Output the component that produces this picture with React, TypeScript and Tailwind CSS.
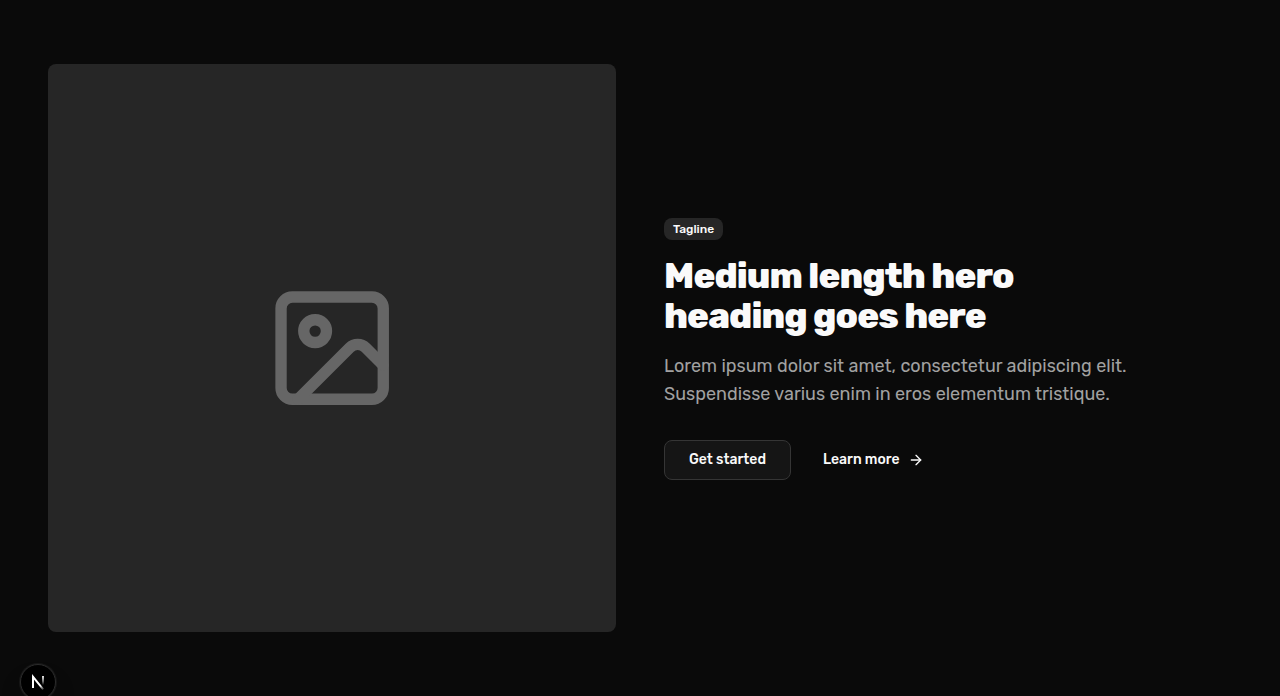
import { ArrowRight, Image } from 'lucide-react';

function DevBadge() {
  return (
    <button
      type="button"
      aria-label="Open Next.js Dev Tools"
      className="fixed -bottom-1 left-5 flex size-9 items-center justify-center rounded-full border border-[#2b2b2b] bg-black shadow-[0_0_0_1px_#171717,0_16px_32px_-8px_rgba(0,0,0,0.24)]"
    >
      <svg width="40" height="40" viewBox="0 0 40 40" fill="none" className="shrink-0" aria-hidden="true">
        <defs>
          <linearGradient id="stem" x1="25" y1="14" x2="25" y2="23" gradientUnits="userSpaceOnUse">
            <stop stopColor="white" />
            <stop offset="0.6" stopColor="white" stopOpacity="0.5" />
            <stop offset="1" stopColor="white" stopOpacity="0" />
          </linearGradient>
          <linearGradient id="diagonal" x1="20" y1="19" x2="26" y2="27" gradientUnits="userSpaceOnUse">
            <stop stopColor="white" />
            <stop offset="0.5" stopColor="white" />
            <stop offset="1" stopColor="white" stopOpacity="0.2" />
          </linearGradient>
        </defs>
        <path d="M15 26V14.8L25.2 27.4" stroke="url(#diagonal)" strokeWidth="1.9" />
        <path d="M15 26V14.2" stroke="white" strokeWidth="1.9" />
        <path d="M25 14V23" stroke="url(#stem)" strokeWidth="1.8" />
      </svg>
    </button>
  );
}

export default function App() {
  return (
    <div className="min-h-screen bg-[#0a0a0a] font-['Rubik','Inter',sans-serif] text-neutral-50">
      <section className="mx-auto grid max-w-7xl items-center gap-12 px-12 py-16 md:grid-cols-2">
        <div className="flex aspect-square items-center justify-center rounded-lg bg-[#262626]">
          <Image className="size-[24%] text-[#666666]" aria-hidden="true" />
        </div>
        <div className="flex flex-col">
          <div className="mb-4 flex h-6 items-end">
            <span className="rounded-lg border border-transparent bg-[#262626] px-2 py-0.5 text-xs font-medium">
              Tagline
            </span>
          </div>
          <h1 className="mb-4 text-4xl leading-10 font-extrabold tracking-tight text-balance">
            Medium length hero heading goes here
          </h1>
          <p className="mb-8 text-lg leading-7 text-[#a1a1a1]">
            Lorem ipsum dolor sit amet, consectetur adipiscing elit. Suspendisse varius enim in eros elementum tristique.
          </p>
          <div className="flex gap-2 text-sm font-medium">
            <button type="button" className="h-10 rounded-lg border border-[#353535] bg-[#151515] px-6">
              Get started
            </button>
            <button type="button" className="flex h-10 items-center gap-2 rounded-lg px-6">
              Learn more
              <ArrowRight className="size-4" aria-hidden="true" />
            </button>
          </div>
        </div>
      </section>
      <DevBadge />
    </div>
  );
}
